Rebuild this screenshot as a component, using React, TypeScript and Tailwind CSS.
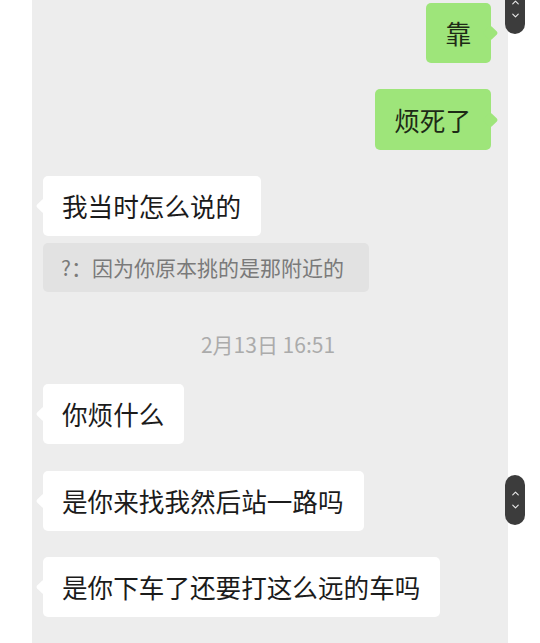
import React from 'react'
import { ChevronUp, ChevronDown } from 'lucide-react'

const font = { fontFamily: '"Noto Sans CJK SC", "Noto Sans", sans-serif' }

export default function App() {
   return (
      <div className="relative w-[540px] h-[643px] overflow-hidden bg-white" style={font}>
         <div className="ml-[32px] w-[476px] h-full bg-[#ededed] flex flex-col pt-[3px] pl-[11px] pr-[17px]">
            {/* SENT */}
            <Bubble side="right" text="靠" className="mt-0" />
            <Bubble side="right" text="烦死了" className="mt-[26px] h-[61px]" />

            {/* RECEIVED */}
            <Bubble side="left" text="我当时怎么说的" className="mt-[26px]" />
            <div className="self-start mt-[7px] h-[49px] flex items-center pl-[18px] pr-[25px] rounded-[5px] bg-[#e2e2e2] text-[21px] text-[#7a7a7a] leading-none">
               ?：因为你原本挑的是那附近的
            </div>

            <div className="mt-[38px] h-[28px] flex items-center justify-center pl-[2px] text-[21px] text-[#ababab] leading-none">2月13日 16:51</div>

            <Bubble side="left" text="你烦什么" className="mt-[26px]" />
            <Bubble side="left" text="是你来找我然后站一路吗" className="mt-[27px]" />
            <Bubble side="left" text="是你下车了还要打这么远的车吗" className="mt-[26px]" />
         </div>

         {/* scroll buttons */}
         <ScrollPill className="top-[-16px]" />
         <ScrollPill className="top-[475px]" />
      </div>
   )
}

function Bubble({ side, text, className = '' }: { side: 'left' | 'right'; text: string; className?: string }) {
   const right = side === 'right'
   return (
      <div
         className={`relative h-[60px] flex items-center pl-[19px] pr-[20px] rounded-[5px] text-[25.6px] leading-none text-[#1b1b1b] ${
            right ? 'self-end bg-[#9ee57a]' : 'self-start bg-white'
         } ${className}`}
      >
         <span className={right ? 'text-[#1d2a16]' : ''}>{text}</span>
         <span
            className={`absolute top-1/2 -translate-y-1/2 w-[11px] h-[11px] rotate-45 rounded-[2px] ${
               right ? 'right-[-5px] bg-[#9ee57a]' : 'left-[-5px] bg-white'
            }`}
         />
      </div>
   )
}

function ScrollPill({ className }: { className: string }) {
   return (
      <div className={`absolute left-[505px] w-[20px] h-[50px] rounded-full bg-[#3c3c3c] flex flex-col items-center justify-center gap-[2px] ${className}`}>
         <ChevronUp size={11} strokeWidth={2.5} className="text-[#e8e8e8]" />
         <ChevronDown size={11} strokeWidth={2.5} className="text-[#e8e8e8]" />
      </div>
   )
}
